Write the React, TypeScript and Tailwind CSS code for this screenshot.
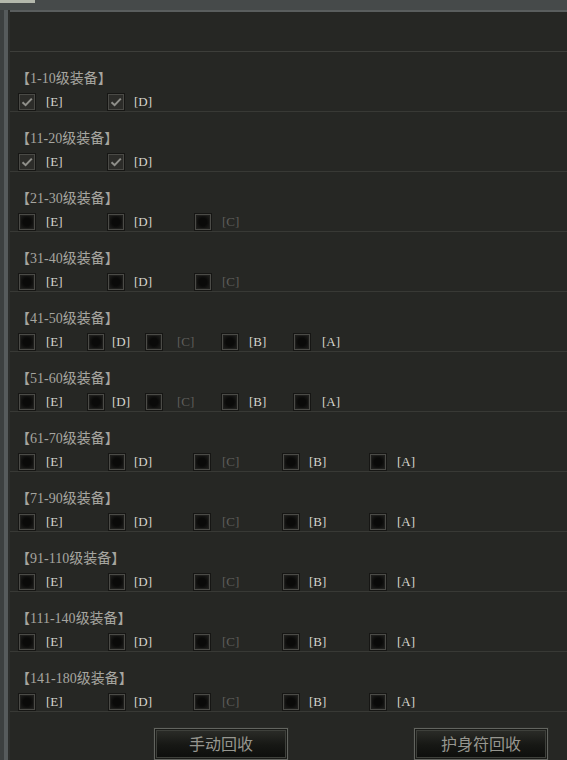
import React from "react";

type Item = { w: string; ml: string; l: string; dim?: boolean; checked?: boolean };

const T1: Item[] = [
  { w: "w-[89px]", ml: "ml-[10px]", l: "[E]", checked: true },
  { w: "w-[89px]", ml: "ml-[9px]", l: "[D]", checked: true },
];
const T2: Item[] = [
  { w: "w-[89px]", ml: "ml-[10px]", l: "[E]" },
  { w: "w-[87px]", ml: "ml-[9px]", l: "[D]" },
  { w: "w-[87px]", ml: "ml-[10px]", l: "[C]", dim: true },
];
const T3: Item[] = [
  { w: "w-[69px]", ml: "ml-[10px]", l: "[E]" },
  { w: "w-[58px]", ml: "ml-[7px]", l: "[D]" },
  { w: "w-[76px]", ml: "ml-[14px]", l: "[C]", dim: true },
  { w: "w-[72px]", ml: "ml-[10px]", l: "[B]" },
  { w: "w-[72px]", ml: "ml-[11px]", l: "[A]" },
];
const T4: Item[] = [
  { w: "w-[90px]", ml: "ml-[10px]", l: "[E]" },
  { w: "w-[85px]", ml: "ml-[8px]", l: "[D]" },
  { w: "w-[89px]", ml: "ml-[11px]", l: "[C]", dim: true },
  { w: "w-[87px]", ml: "ml-[9px]", l: "[B]" },
  { w: "w-[87px]", ml: "ml-[10px]", l: "[A]" },
];

const sections: { t: string; items: Item[] }[] = [
  { t: "1-10", items: T1 },
  { t: "11-20", items: T1 },
  { t: "21-30", items: T2 },
  { t: "31-40", items: T2 },
  { t: "41-50", items: T3 },
  { t: "51-60", items: T3 },
  { t: "61-70", items: T4 },
  { t: "71-90", items: T4 },
  { t: "91-110", items: T4 },
  { t: "111-140", items: T4 },
  { t: "141-180", items: T4 },
];

const font = { fontFamily: '"Liberation Serif", "Noto Sans CJK SC", serif' };

function Box({ checked }: { checked?: boolean }) {
  if (checked) {
    return (
      <div className="h-[18px] w-[18px] shrink-0 border border-[#161614] bg-[#4a4a46] p-px">
        <div className="flex h-full w-full items-center justify-center bg-[#2c2c29]">
          <svg width="12" height="10" viewBox="0 0 12 10">
            <path d="M1.5 5.2 L4.6 8.2 L10.8 1.6" fill="none" stroke="#8f8f8a" strokeWidth="2" />
          </svg>
        </div>
      </div>
    );
  }
  return (
    <div className="h-[18px] w-[18px] shrink-0 border border-[#161614] bg-[#4b4b47] p-px">
      <div className="h-full w-full border border-[#1e1e1c] bg-[radial-gradient(circle,#0a0a09_45%,#1c1c1a_100%)]" />
    </div>
  );
}

function Btn({ label }: { label: string }) {
  return (
    <div className="h-[34px] w-[136px] shrink-0 border border-[#2a2b28] bg-[#62645f] p-px">
      <div className="h-full w-full border border-[#1a1b18] bg-[#3e403b] p-px">
        <div className="flex h-full w-full items-center justify-center bg-[linear-gradient(#2a2b27,#161714_55%,#0e0f0d)] pb-[2px] text-[16px] text-[#96968f]" style={{ fontFamily: '"Noto Sans CJK SC", sans-serif' }}>
          {label}
        </div>
      </div>
    </div>
  );
}

export default function App() {
  return (
    <div className="relative flex h-[760px] w-[567px] flex-col overflow-hidden bg-[#262724]" style={font}>
      <div className="relative h-[10px] shrink-0 bg-[#464a4a]">
        <div className="absolute left-0 top-0 h-[3px] w-[35px] bg-[#b4b8ac]" />
      </div>
      <div className="flex flex-1">
        <div className="flex w-[10px] shrink-0">
          <div className="w-[4px] bg-[#3c4040]" />
          <div className="w-[4px] bg-[#565b5c]" />
          <div className="w-[2px] bg-[#2c2e2c]" />
        </div>
        <div className="flex flex-1 flex-col">
          <div className="h-[2px] bg-[#5a5e5e]" />
          <div className="h-[40px] border-b border-[#3d3e3a]" />
          {sections.map((s, i) => (
            <div key={i} className="flex h-[60px] flex-col border-b border-[#383935] pl-[8px] pt-[20px]">
              <div className="-ml-[2px] flex h-[14px] items-center text-[14px] leading-[14px] text-[#a6a6a0]">
                【{s.t}级装备】
              </div>
              <div className="mt-[7px] flex h-[18px] items-center">
                {s.items.map((it, j) => (
                  <div key={j} className={`flex items-center ${it.w}`}>
                    <Box checked={it.checked} />
                    <span className={`${it.ml} text-[13px] leading-[18px] ${it.dim ? "text-[#5e5e5a]" : "text-[#d6d6ce]"}`}>{it.l}</span>
                  </div>
                ))}
              </div>
            </div>
          ))}
          <div className="mt-[15px] flex pl-[143px]">
            <Btn label="手动回收" />
            <div className="w-[124px] shrink-0" />
            <Btn label="护身符回收" />
          </div>
        </div>
      </div>
    </div>
  );
}
